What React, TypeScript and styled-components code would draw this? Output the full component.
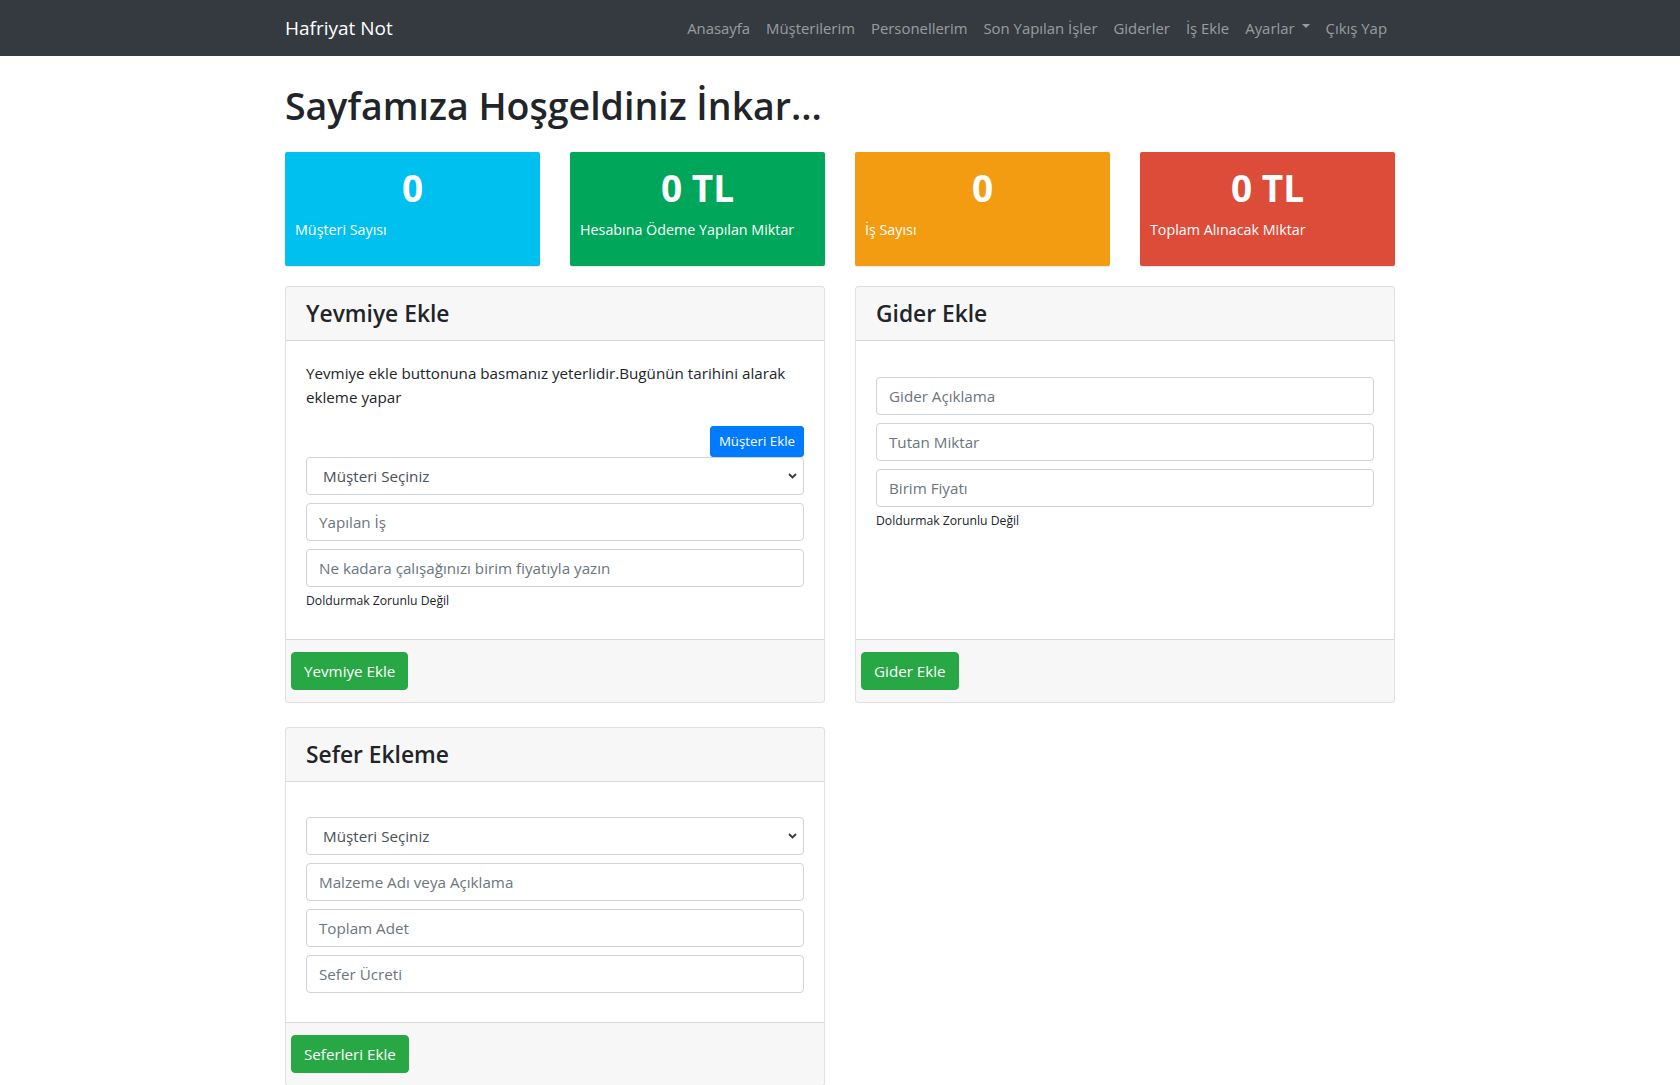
import React from "react";
import styled, { createGlobalStyle } from "styled-components";

const GlobalStyle = createGlobalStyle`
  *, *::before, *::after { box-sizing: border-box; }
  html, body { margin: 0; padding: 0; }
  body {
    font-family: "Open Sans", "Segoe UI", "Noto Sans", sans-serif;
    font-size: 15.2px;
    line-height: 24px;
    color: #212529;
    background: #ffffff;
  }
`;

const Navbar = styled.nav`
  background: #343a40;
  padding: 8px 16px;
`;

const NavContainer = styled.div`
  max-width: 1140px;
  margin: 0 auto;
  padding: 0 15px;
  display: flex;
  align-items: center;
  justify-content: space-between;
`;

const Brand = styled.a`
  color: #ffffff;
  font-size: 19px;
  line-height: 30px;
  padding: 5px 0;
  text-decoration: none;
`;

const NavList = styled.ul`
  display: flex;
  list-style: none;
  margin: 0;
  padding: 0;
`;

const NavLink = styled.a`
  display: flex;
  align-items: center;
  padding: 8px;
  color: rgba(255, 255, 255, 0.5);
  font-size: 14.9px;
  line-height: 24px;
  text-decoration: none;
  white-space: nowrap;
`;

const Caret = styled.span`
  display: inline-block;
  margin-left: 7px;
  border-top: 4.6px solid rgba(255, 255, 255, 0.5);
  border-left: 4.6px solid transparent;
  border-right: 4.6px solid transparent;
  transform: translateY(-2px);
`;

const Main = styled.main`
  max-width: 1140px;
  margin: 0 auto;
  padding: 0 15px;
`;

const Title = styled.h1`
  font-size: 37.5px;
  font-weight: 600;
  line-height: 48px;
  margin: 26px 0 22px;
`;

const StatsRow = styled.div`
  display: grid;
  grid-template-columns: repeat(4, 1fr);
  gap: 30px;
`;

const StatBox = styled.div<{ $bg: string }>`
  background: ${(p) => p.$bg};
  color: #ffffff;
  border-radius: 2px;
  box-shadow: 0 1px 1px rgba(0, 0, 0, 0.1);
  padding: 10px;
`;

const StatValue = styled.div`
  font-size: 37px;
  font-weight: 700;
  line-height: 51px;
  text-align: center;
  margin-bottom: 6px;
  white-space: nowrap;
`;

const StatLabel = styled.p`
  font-size: 14.3px;
  line-height: 22px;
  margin: 0 0 15px;
`;

const CardsGrid = styled.div`
  display: grid;
  grid-template-columns: 1fr 1fr;
  column-gap: 30px;
  row-gap: 24px;
  margin-top: 20px;
`;

const Card = styled.section`
  display: flex;
  flex-direction: column;
  background: #ffffff;
  border: 1px solid rgba(0, 0, 0, 0.125);
  border-radius: 4px;
  overflow: hidden;
`;

const CardHeader = styled.header`
  padding: 13px 20px 11px;
  background: rgba(0, 0, 0, 0.03);
  border-bottom: 1px solid rgba(0, 0, 0, 0.125);
`;

const CardTitle = styled.h4`
  margin: 0;
  font-size: 22.8px;
  font-weight: 600;
  line-height: 28.8px;
`;

const CardBody = styled.div<{ $offset?: number }>`
  flex: 1;
  padding: ${(p) => 20 + (p.$offset ?? 0)}px 20px 29px;
`;

const Intro = styled.p`
  margin: 0 0 17px;
  line-height: 24px;
`;

const ButtonRow = styled.div`
  display: flex;
  justify-content: flex-end;
`;

const SmallButton = styled.button`
  background: #007bff;
  border: 1px solid #007bff;
  color: #ffffff;
  border-radius: 3px;
  padding: 4px 8px;
  font-family: inherit;
  font-size: 13.3px;
  line-height: 21px;
`;

const FieldStack = styled.div`
  display: flex;
  flex-direction: column;
  gap: 8px;
`;

const Input = styled.input`
  display: block;
  width: 100%;
  height: 38px;
  padding: 6px 12px;
  font-family: inherit;
  font-size: 15.2px;
  line-height: 24px;
  color: #495057;
  background: #ffffff;
  border: 1px solid #ced4da;
  border-radius: 4px;
  &::placeholder {
    color: #6c757d;
  }
`;

const SelectWrap = styled.div`
  position: relative;
`;

const Select = styled.select`
  display: block;
  width: 100%;
  height: 38px;
  padding: 6px 28px 6px 16px;
  font-family: inherit;
  font-size: 15.2px;
  line-height: 24px;
  color: #495057;
  background: #ffffff;
  border: 1px solid #ced4da;
  border-radius: 4px;
  appearance: none;
  -webkit-appearance: none;
`;

const Chevron = styled.svg`
  position: absolute;
  right: 7px;
  top: 50%;
  width: 9px;
  height: 6px;
  margin-top: -3px;
  pointer-events: none;
`;

const HelpText = styled.small`
  display: block;
  margin-top: 4px;
  font-size: 12.2px;
  line-height: 19px;
  color: #212529;
`;

const CardFooter = styled.footer`
  padding: 12px 5px;
  background: rgba(0, 0, 0, 0.03);
  border-top: 1px solid rgba(0, 0, 0, 0.125);
`;

const SuccessButton = styled.button`
  background: #28a745;
  border: 1px solid #28a745;
  color: #ffffff;
  border-radius: 4px;
  padding: 6px 12px;
  font-family: inherit;
  font-size: 15.2px;
  line-height: 24px;
`;

const CustomerSelect = () => (
  <SelectWrap>
    <Select defaultValue="">
      <option value="">Müşteri Seçiniz</option>
    </Select>
    <Chevron viewBox="0 0 9 6">
      <polyline points="1,1 4.5,4.5 8,1" fill="none" stroke="#343a40" strokeWidth="1.8" />
    </Chevron>
  </SelectWrap>
);

const stats = [
  { value: "0", label: "Müşteri Sayısı", bg: "#00c0ef" },
  { value: "0 TL", label: "Hesabına Ödeme Yapılan Miktar", bg: "#00a65a" },
  { value: "0", label: "İş Sayısı", bg: "#f39c12" },
  { value: "0 TL", label: "Toplam Alınacak Miktar", bg: "#dd4b39" },
];

const navItems = [
  "Anasayfa",
  "Müşterilerim",
  "Personellerim",
  "Son Yapılan İşler",
  "Giderler",
  "İş Ekle",
];

export default function App() {
  return (
    <>
      <GlobalStyle />
      <Navbar>
        <NavContainer>
          <Brand href="#">Hafriyat Not</Brand>
          <NavList>
            {navItems.map((n) => (
              <li key={n}>
                <NavLink href="#">{n}</NavLink>
              </li>
            ))}
            <li>
              <NavLink href="#">
                Ayarlar
                <Caret />
              </NavLink>
            </li>
            <li>
              <NavLink href="#">Çıkış Yap</NavLink>
            </li>
          </NavList>
        </NavContainer>
      </Navbar>
      <Main>
        <Title>Sayfamıza Hoşgeldiniz İnkar...</Title>
        <StatsRow>
          {stats.map((s) => (
            <StatBox key={s.label} $bg={s.bg}>
              <StatValue>{s.value}</StatValue>
              <StatLabel>{s.label}</StatLabel>
            </StatBox>
          ))}
        </StatsRow>
        <CardsGrid>
          <Card>
            <CardHeader>
              <CardTitle>Yevmiye Ekle</CardTitle>
            </CardHeader>
            <CardBody>
              <Intro>
                Yevmiye ekle buttonuna basmanız yeterlidir.Bugünün tarihini alarak ekleme yapar
              </Intro>
              <ButtonRow>
                <SmallButton>Müşteri Ekle</SmallButton>
              </ButtonRow>
              <FieldStack>
                <CustomerSelect />
                <Input placeholder="Yapılan İş" />
                <Input placeholder="Ne kadara çalışağınızı birim fiyatıyla yazın" />
              </FieldStack>
              <HelpText>Doldurmak Zorunlu Değil</HelpText>
            </CardBody>
            <CardFooter>
              <SuccessButton>Yevmiye Ekle</SuccessButton>
            </CardFooter>
          </Card>
          <Card>
            <CardHeader>
              <CardTitle>Gider Ekle</CardTitle>
            </CardHeader>
            <CardBody $offset={16}>
              <FieldStack>
                <Input placeholder="Gider Açıklama" />
                <Input placeholder="Tutan Miktar" />
                <Input placeholder="Birim Fiyatı" />
              </FieldStack>
              <HelpText>Doldurmak Zorunlu Değil</HelpText>
            </CardBody>
            <CardFooter>
              <SuccessButton>Gider Ekle</SuccessButton>
            </CardFooter>
          </Card>
          <Card>
            <CardHeader>
              <CardTitle>Sefer Ekleme</CardTitle>
            </CardHeader>
            <CardBody $offset={15}>
              <FieldStack>
                <CustomerSelect />
                <Input placeholder="Malzeme Adı veya Açıklama" />
                <Input placeholder="Toplam Adet" />
                <Input placeholder="Sefer Ücreti" />
              </FieldStack>
            </CardBody>
            <CardFooter>
              <SuccessButton>Seferleri Ekle</SuccessButton>
            </CardFooter>
          </Card>
        </CardsGrid>
      </Main>
    </>
  );
}
